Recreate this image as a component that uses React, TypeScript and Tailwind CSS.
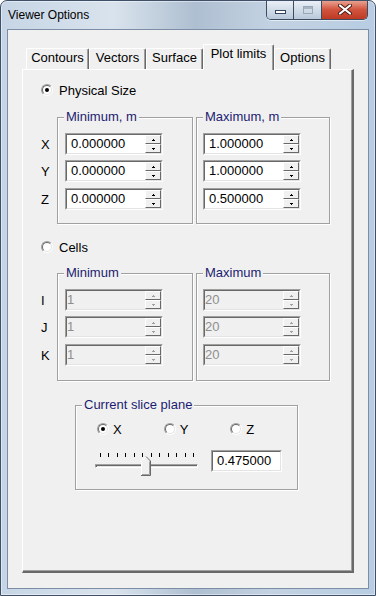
import React from "react";

type SpinProps = {
  value: string;
  disabled?: boolean;
  className?: string;
};

function Radio({ checked }: { checked?: boolean }) {
  return (
    <span className="flex h-[12px] w-[12px] shrink-0 items-center justify-center rounded-full border border-t-[#a0a0a0] border-l-[#a0a0a0] border-r-white border-b-white">
      <span className="flex h-[10px] w-[10px] items-center justify-center rounded-full border border-t-[#696969] border-l-[#696969] border-r-[#e3e3e3] border-b-[#e3e3e3] bg-white">
        {checked && <span className="h-[4px] w-[4px] rounded-full bg-black" />}
      </span>
    </span>
  );
}

function SpinButton({ up, disabled }: { up?: boolean; disabled?: boolean }) {
  const fill = disabled ? "#a0a0a0" : "#000";
  return (
    <div className="flex h-[9px] items-center justify-center border border-t-white border-l-white border-r-[#696969] border-b-[#696969] bg-[#f0f0f0]">
      <svg width="3" height="2" viewBox="0 0 3 2">
        {up ? (
          <>
            <rect x="1" y="0" width="1" height="1" fill={fill} />
            <rect x="0" y="1" width="3" height="1" fill={fill} />
          </>
        ) : (
          <>
            <rect x="0" y="0" width="3" height="1" fill={fill} />
            <rect x="1" y="1" width="1" height="1" fill={fill} />
          </>
        )}
      </svg>
    </div>
  );
}

function Sunken({
  className = "",
  disabled,
  children,
}: {
  className?: string;
  disabled?: boolean;
  children: React.ReactNode;
}) {
  return (
    <div
      className={`flex h-[22px] border border-t-[#a0a0a0] border-l-[#a0a0a0] border-r-white border-b-white ${className}`}
    >
      <div
        className={`flex min-w-0 flex-1 border border-t-[#696969] border-l-[#696969] border-r-[#e3e3e3] border-b-[#e3e3e3] ${
          disabled ? "bg-[#f0f0f0]" : "bg-white"
        }`}
      >
        {children}
      </div>
    </div>
  );
}

function SpinEdit({ value, disabled, className = "" }: SpinProps) {
  return (
    <Sunken className={`w-[98px] ${className}`} disabled={disabled}>
      <span
        className={`flex-1 text-[13px] leading-[18px] ${
          disabled ? "pl-0 text-[#8e8e8e]" : "pl-[4px] text-black"
        }`}
      >
        {value}
      </span>
      <div className="flex w-[16px] flex-col">
        <SpinButton up disabled={disabled} />
        <SpinButton disabled={disabled} />
      </div>
    </Sunken>
  );
}

function Group({
  label,
  className = "",
  children,
}: {
  label: string;
  className?: string;
  children?: React.ReactNode;
}) {
  return (
    <div
      className={`relative border border-[#a0a0a0] shadow-[inset_1px_1px_0_#fff,1px_1px_0_#fff] ${className}`}
    >
      <span className="absolute -top-[9px] left-[6px] bg-[#f0f0f0] px-[2px] text-[13px] leading-[15px] text-[#1c1c70]">
        {label}
      </span>
      {children}
    </div>
  );
}

function InputColumn({
  values,
  disabled,
  className = "",
}: {
  values: string[];
  disabled?: boolean;
  className?: string;
}) {
  return (
    <div className={`flex flex-col pt-[15px] ${className}`}>
      <SpinEdit value={values[0]} disabled={disabled} />
      <SpinEdit value={values[1]} disabled={disabled} className="mt-[5px]" />
      <SpinEdit value={values[2]} disabled={disabled} className="mt-[6px]" />
    </div>
  );
}

function Labels({ names }: { names: string[] }) {
  return (
    <div className="flex w-[34px] flex-col pl-[18px] pt-[16px] text-[13px] leading-[15px]">
      <div className="flex h-[22px] items-center">{names[0]}</div>
      <div className="mt-[5px] flex h-[22px] items-center">{names[1]}</div>
      <div className="mt-[6px] flex h-[22px] items-center">{names[2]}</div>
    </div>
  );
}

function Tab({
  title,
  width,
  selected,
}: {
  title: string;
  width: string;
  selected?: boolean;
}) {
  return (
    <div
      className={`relative flex justify-center rounded-t-[2px] border-t border-l border-r border-t-white border-l-white border-r-[#696969] bg-[#f0f0f0] text-[13px] leading-[15px] shadow-[inset_-1px_0_#a0a0a0] ${width} ${
        selected ? "z-10 -mb-[1px] h-[26px] pt-[1px]" : "h-[21px] pt-[1px]"
      }`}
    >
      {title}
    </div>
  );
}

function Slider() {
  const ticks = Array.from({ length: 12 });
  return (
    <div className="relative h-[26px] w-[103px]">
      <div className="absolute top-[3px] left-[5px] flex w-[94px] justify-between">
        {ticks.map((_, i) => (
          <span key={i} className="h-[4px] w-[1px] bg-black" />
        ))}
      </div>
      <div className="absolute top-[14px] left-0 h-[4px] w-[103px] border border-t-[#a0a0a0] border-l-[#a0a0a0] border-r-white border-b-white bg-[#e3e3e3] shadow-[inset_1px_1px_0_#696969]" />
      <svg
        className="absolute top-[6px] left-[46px]"
        width="10"
        height="20"
        viewBox="0 0 10 20"
      >
        <path d="M0.5 19.5 V5 L5 0.5 L9.5 5 V19.5 Z" fill="#f0f0f0" />
        <path d="M0.5 19 V5 L5 0.5" fill="none" stroke="#fff" />
        <path d="M5 0.5 L9.5 5 V19.5 H0" fill="none" stroke="#696969" />
        <path d="M8.5 5.5 V18.5 H1" fill="none" stroke="#a0a0a0" />
      </svg>
    </div>
  );
}

function TitleButtons() {
  return (
    <div className="-mt-[1px] mr-[1px] flex h-[20px] overflow-hidden rounded-b-[5px] border border-t-0 border-[#3b4b60] shadow-[0_1px_0_rgba(255,255,255,0.55)]">
      <div className="flex w-[27px] items-end justify-center border-r border-[#3b4b60] bg-gradient-to-b from-[#edf2f8] via-[#d2dde9] to-[#b9c9db] pb-[5px]">
        <span className="h-[4px] w-[11px] border border-[#33445a] bg-white" />
      </div>
      <div className="flex w-[28px] items-center justify-center border-r border-[#3b4b60] bg-gradient-to-b from-[#edf2f8] via-[#d2dde9] to-[#b9c9db]">
        <span className="h-[8px] w-[10px] border border-[#9aa7b7] shadow-[inset_0_2px_0_#aab5c3]" />
      </div>
      <div className="flex w-[45px] items-center justify-center bg-gradient-to-b from-[#e9a999] via-[#d2543e] to-[#bd3a24]">
        <svg width="14" height="11" viewBox="0 0 14 11">
          <path
            d="M2 1.5 L12 9.5 M12 1.5 L2 9.5"
            stroke="#4a1c14"
            strokeWidth="4"
            strokeLinecap="round"
          />
          <path
            d="M2 1.5 L12 9.5 M12 1.5 L2 9.5"
            stroke="#fff"
            strokeWidth="2.2"
            strokeLinecap="round"
          />
        </svg>
      </div>
    </div>
  );
}

export default function App() {
  return (
    <div className="h-[596px] w-[376px] overflow-hidden rounded-t-[7px] border border-[#3f5068] bg-[linear-gradient(90deg,#c6d5e5,#d9e3ed_30%,#aebfd1_52%,#c3d2e2_72%,#b8cde3)] px-[6px] pb-[6px] font-['Liberation_Sans',Arial,sans-serif] text-black shadow-[inset_0_0_0_1px_rgba(255,255,255,0.45)]">
      <div className="flex h-[28px] items-start justify-between">
        <span className="mt-[7px] pl-[1px] text-[12px] leading-[14px] text-black">
          Viewer Options
        </span>
        <TitleButtons />
      </div>

      <div className="h-[560px] border border-[#7b8ea5] bg-[#f0f0f0] pt-[15px] pr-[14px] pl-[14px]">
        <div className="flex h-[24px] items-end pl-[4px]">
          <Tab title="Contours" width="w-[63px]" />
          <Tab title="Vectors" width="w-[57px]" />
          <Tab title="Surface" width="w-[57px]" />
          <Tab title="Plot limits" width="w-[71px]" selected />
          <Tab title="Options" width="w-[57px]" />
        </div>

        <div className="h-[504px] border-t border-l border-r-2 border-b-2 border-t-white border-l-white border-r-[#696969] border-b-[#696969] text-[13px] leading-[15px] shadow-[inset_-1px_-1px_0_#a0a0a0]">
          <div className="mt-[14px] ml-[18px] flex h-[12px] items-center gap-[6px]">
            <Radio checked />
            <span>Physical Size</span>
          </div>

          <div className="mt-[21px] flex">
            <Labels names={["X", "Y", "Z"]} />
            <Group label="Minimum, m" className="h-[107px] w-[136px]">
              <InputColumn
                className="pl-[7px]"
                values={["0.000000", "0.000000", "0.000000"]}
              />
            </Group>
            <Group label="Maximum, m" className="ml-[3px] h-[107px] w-[134px]">
              <InputColumn
                className="pl-[6px]"
                values={["1.000000", "1.000000", "0.500000"]}
              />
            </Group>
          </div>

          <div className="mt-[17px] ml-[18px] flex h-[12px] items-center gap-[6px]">
            <Radio />
            <span>Cells</span>
          </div>

          <div className="mt-[20px] flex">
            <Labels names={["I", "J", "K"]} />
            <Group label="Minimum" className="h-[108px] w-[136px]">
              <InputColumn className="pl-[7px]" values={["1", "1", "1"]} disabled />
            </Group>
            <Group label="Maximum" className="ml-[3px] h-[108px] w-[134px]">
              <InputColumn className="pl-[6px]" values={["20", "20", "20"]} disabled />
            </Group>
          </div>

          <Group label="Current slice plane" className="mt-[24px] ml-[52px] h-[85px] w-[223px]">
            <div className="flex pt-[17px] pl-[21px]">
              {["X", "Y", "Z"].map((axis, i) => (
                <div key={axis} className="flex h-[12px] w-[70px] items-center gap-[4px]">
                  <Radio checked={i === 0} />
                  <span>{axis}</span>
                </div>
              ))}
            </div>
            <div className="mt-[15px] flex items-start pl-[19px]">
              <Slider />
              <Sunken className="ml-[13px] w-[71px]">
                <span className="flex-1 pl-[4px] text-[13px] leading-[18px]">0.475000</span>
              </Sunken>
            </div>
          </Group>
        </div>
      </div>
    </div>
  );
}
